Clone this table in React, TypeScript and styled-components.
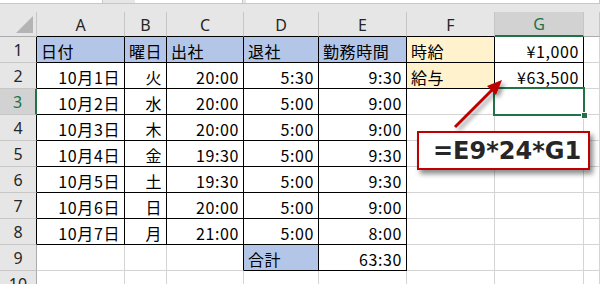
import React from "react";
import styled, { createGlobalStyle } from "styled-components";

const GlobalStyle = createGlobalStyle`
  html, body {
    margin: 0;
    padding: 0;
    background: #ffffff;
    overflow: hidden;
  }
  * { box-sizing: border-box; }
`;

const GREEN = "#217346";
const BLACK = "#000000";
const GRID = "#d4d4d4";
const HEAD_BG = "#e6e6e6";
const HEAD_SEL = "#d2d2d2";
const HEAD_LINE = "#c6c6c6";
const BLUE = "#b4c6e7";
const YELLOW = "#fff2cc";
const RED = "#c00000";

const COLS = [88, 42, 77, 75, 88, 88, 89, 16];
const LETTERS = ["A", "B", "C", "D", "E", "F", "G", ""];

const Sheet = styled.div`
  position: relative;
  width: 600px;
  height: 284px;
  overflow: hidden;
  background: ${HEAD_BG};
`;

const TopStrip = styled.div`
  display: flex;
  height: 4px;
  gap: 3px;
  border-bottom: 1px solid #c8c8c8;
`;

const StripBox = styled.div<{ $w?: number; $gapBefore?: number }>`
  height: 3px;
  background: #ffffff;
  border-right: 1px solid #c8c8c8;
  width: ${(p) => (p.$w ? `${p.$w}px` : "auto")};
  flex: ${(p) => (p.$w ? "none" : "1")};
  margin-left: ${(p) => p.$gapBefore ?? 0}px;
`;

const HeaderGap = styled.div`
  height: 8px;
  background: ${HEAD_BG};
`;

const Grid = styled.div`
  display: grid;
  grid-template-columns: 37px ${COLS.map((w) => `${w}px`).join(" ")};
  grid-template-rows: 25px repeat(10, 26px);
  background: #ffffff;
`;

const Corner = styled.div`
  position: relative;
  background: ${HEAD_BG};
  border-right: 1px solid ${HEAD_LINE};
  border-bottom: 1px solid #ababab;
`;

const CornerMark = styled.svg`
  position: absolute;
  right: 3px;
  bottom: 3px;
`;

const headFont = `"Noto Sans", "Liberation Sans", sans-serif`;
const cellFont = `"Noto Sans CJK JP", "Noto Sans", sans-serif`;

const ColHead = styled.div<{ $sel?: boolean; $line: string; $lineW: number }>`
  display: flex;
  align-items: center;
  justify-content: center;
  font-family: ${headFont};
  font-size: 16px;
  color: ${(p) => (p.$sel ? GREEN : "#262626")};
  background: ${(p) => (p.$sel ? HEAD_SEL : HEAD_BG)};
  border-right: 1px solid ${HEAD_LINE};
  border-bottom: ${(p) => p.$lineW}px solid ${(p) => p.$line};
  padding-top: 1px;
`;

const RowHead = styled.div<{ $sel?: boolean; $line: string; $lineW: number }>`
  display: flex;
  align-items: center;
  justify-content: center;
  font-family: ${headFont};
  font-size: 16px;
  color: ${(p) => (p.$sel ? GREEN : "#262626")};
  background: ${(p) => (p.$sel ? HEAD_SEL : HEAD_BG)};
  border-bottom: 1px solid ${HEAD_LINE};
  border-right: ${(p) => p.$lineW}px solid ${(p) => p.$line};
  padding-top: 1px;
`;

const Cell = styled.div<{
  $fill?: string;
  $align: "left" | "right";
  $right: string;
  $bottom: string;
}>`
  position: relative;
  display: flex;
  align-items: center;
  justify-content: ${(p) => (p.$align === "left" ? "flex-start" : "flex-end")};
  padding: 2px 4px 0 4px;
  font-family: ${cellFont};
  font-size: 16px;
  letter-spacing: 0.6px;
  color: #000000;
  white-space: nowrap;
  background: ${(p) => p.$fill ?? "transparent"};
  border-right: 1px solid ${(p) => p.$right};
  border-bottom: 1px solid ${(p) => p.$bottom};
`;

const Selection = styled.div`
  position: absolute;
  top: -2px;
  left: -2px;
  right: -2px;
  bottom: -2px;
  border: 2px solid ${GREEN};
  z-index: 2;
  pointer-events: none;
`;

const FillHandle = styled.div`
  position: absolute;
  right: -5px;
  bottom: -5px;
  width: 7px;
  height: 7px;
  background: ${GREEN};
  border: 1px solid #ffffff;
`;

const Pointer = styled.svg`
  position: absolute;
  left: 0;
  top: 0;
  overflow: visible;
  z-index: 3;
`;

const Callout = styled.div`
  position: absolute;
  left: 417px;
  top: 131px;
  width: 173px;
  height: 39px;
  display: flex;
  align-items: center;
  padding-left: 14px;
  padding-top: 1px;
  background: #ffffff;
  border: 2px solid ${RED};
  box-shadow: 3px 4px 5px rgba(0, 0, 0, 0.45);
  font-family: "DejaVu Sans", Verdana, sans-serif;
  font-weight: bold;
  font-size: 24px;
  color: #262626;
  z-index: 4;
`;

type Entry = { text?: string; align?: "left" | "right"; fill?: string };

const B = (text: string): Entry => ({ text, align: "left", fill: BLUE });
const Y = (text: string): Entry => ({ text, align: "left", fill: YELLOW });
const R = (text: string): Entry => ({ text, align: "right" });

const days: [string, string, string, string, string][] = [
  ["10月1日", "火", "20:00", "5:30", "9:30"],
  ["10月2日", "水", "20:00", "5:00", "9:00"],
  ["10月3日", "木", "20:00", "5:00", "9:00"],
  ["10月4日", "金", "19:30", "5:00", "9:30"],
  ["10月5日", "土", "19:30", "5:00", "9:30"],
  ["10月6日", "日", "20:00", "5:00", "9:00"],
  ["10月7日", "月", "21:00", "5:00", "8:00"],
];

const rows: Entry[][] = [
  [B("日付"), B("曜日"), B("出社"), B("退社"), B("勤務時間"), Y("時給"), R("¥1,000"), {}],
  ...days.map((d, i) => {
    const row: Entry[] = d.map((t) => R(t));
    if (i === 0) row.push(Y("給与"), R("¥63,500"));
    else row.push({}, {});
    row.push({});
    return row;
  }),
  [{}, {}, {}, B("合計"), R("63:30"), {}, {}, {}],
  [{}, {}, {}, {}, {}, {}, {}, {}],
];

// which cell edges carry the black table rule
const rightIsBlack = (r: number, c: number) =>
  (r <= 8 && c <= 4) || (r === 9 && c >= 2 && c <= 4) || (r <= 2 && (c === 5 || c === 6));
const bottomIsBlack = (r: number, c: number) =>
  (r <= 8 && c <= 4) || (r === 9 && (c === 3 || c === 4)) || (r <= 2 && (c === 5 || c === 6));

export default function App() {
  return (
    <>
      <GlobalStyle />
      <Sheet>
        <TopStrip>
          <StripBox $w={103} />
          <StripBox $w={108} $gapBefore={29} />
          <StripBox />
        </TopStrip>
        <HeaderGap />
        <Grid>
          <Corner>
            <CornerMark width="17" height="17" viewBox="0 0 17 17">
              <polygon points="17,0 17,17 0,17" fill="#b4b4b4" />
            </CornerMark>
          </Corner>
          {LETTERS.map((l, c) => (
            <ColHead
              key={`h${c}`}
              $sel={c === 6}
              $line={c === 6 ? GREEN : c <= 5 ? BLACK : "#ababab"}
              $lineW={c === 6 ? 2 : 1}
            >
              {l}
            </ColHead>
          ))}
          {rows.map((row, ri) => {
            const r = ri + 1;
            return (
              <React.Fragment key={`r${r}`}>
                <RowHead
                  $sel={r === 3}
                  $line={r === 3 ? GREEN : r <= 8 ? BLACK : "#ababab"}
                  $lineW={r === 3 ? 2 : 1}
                >
                  {r}
                </RowHead>
                {row.map((cell, c) => (
                  <Cell
                    key={`c${r}-${c}`}
                    $fill={cell.fill}
                    $align={cell.align ?? "right"}
                    $right={rightIsBlack(r, c) ? BLACK : GRID}
                    $bottom={bottomIsBlack(r, c) ? BLACK : GRID}
                  >
                    {cell.text}
                    {r === 3 && c === 6 && (
                      <Selection>
                        <FillHandle />
                      </Selection>
                    )}
                  </Cell>
                ))}
              </React.Fragment>
            );
          })}
        </Grid>

        <Pointer width="600" height="284" viewBox="0 0 600 284">
          <defs>
            <filter id="arrowShadow" x="-50%" y="-50%" width="200%" height="200%">
              <feDropShadow dx="3" dy="3" stdDeviation="2" floodColor="#000" floodOpacity="0.4" />
            </filter>
          </defs>
          <g filter="url(#arrowShadow)">
            <line x1="455" y1="127" x2="494" y2="88" stroke={RED} strokeWidth="3" />
            <polygon points="502,80 487,86 496,95" fill={RED} />
          </g>
        </Pointer>

        <Callout>=E9*24*G1</Callout>
      </Sheet>
    </>
  );
}
